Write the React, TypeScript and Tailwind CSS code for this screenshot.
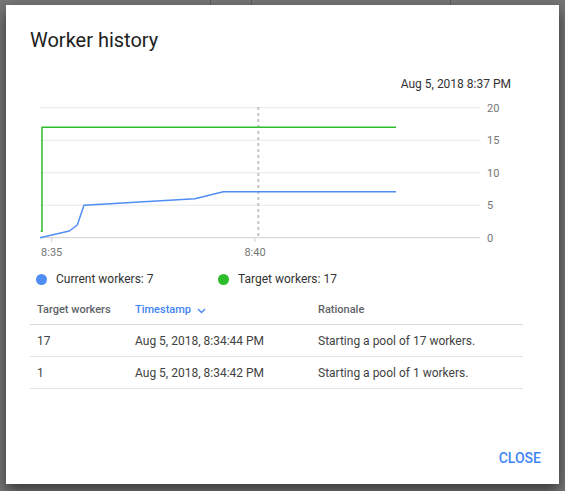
const blue = "#4f8ef5";
const green = "#2cbc2c";

const rows = [
  { target: "17", ts: "Aug 5, 2018, 8:34:44 PM", why: "Starting a pool of 17 workers." },
  { target: "1", ts: "Aug 5, 2018, 8:34:42 PM", why: "Starting a pool of 1 workers." },
];

function Chart() {
  const grid = [
    { y: 106.7, label: "20" },
    { y: 139.2, label: "15" },
    { y: 171.7, label: "10" },
    { y: 204.2, label: "5" },
    { y: 236.7, label: "0" },
  ];
  // viewBox uses the page coordinates so the points read straight off the screenshot
  return (
    <svg width={490} height={167} viewBox="30 93 490 167" className="block">
      {grid.map((g) => (
        <g key={g.label}>
          <line x1={40} x2={480} y1={g.y} y2={g.y} stroke={g.label === "0" ? "#cfcfcf" : "#e8e8e8"} strokeWidth={1} />
          <text x={487} y={g.y + 4} fontSize={11} fill="#757575" fontFamily="Roboto, sans-serif">
            {g.label}
          </text>
        </g>
      ))}
      <line x1={258.3} x2={258.3} y1={106} y2={236.7} stroke="#c4c4c4" strokeWidth={2} strokeDasharray="3 3" />
      <line x1={51.7} x2={51.7} y1={236.7} y2={241} stroke="#cfcfcf" />
      <line x1={255} x2={255} y1={236.7} y2={241} stroke="#cfcfcf" />
      <text x={51.7} y={255} fontSize={11} fill="#757575" textAnchor="middle" fontFamily="Roboto, sans-serif">
        8:35
      </text>
      <text x={255} y={255} fontSize={11} fill="#757575" textAnchor="middle" fontFamily="Roboto, sans-serif">
        8:40
      </text>
      <polyline
        points="40.7,230.2 42,230.2 42,126.2 396,126.2"
        fill="none"
        stroke={green}
        strokeWidth={1.5}
      />
      <polyline
        points="40,236.7 69.3,230 77.3,224 84,204.2 195,197.7 223.3,190.7 396,190.7"
        fill="none"
        stroke={blue}
        strokeWidth={1.5}
        strokeLinejoin="round"
      />
    </svg>
  );
}

export default function App() {
  return (
    <div className="relative h-[491px] w-[565px] overflow-hidden bg-[#767676] pl-[6px] pt-[5px] font-['Roboto',sans-serif]">
      <div className="absolute left-[210px] top-0 h-[5px] w-px bg-[#5e5e5e]" />
      <div className="absolute left-[251px] top-0 h-[5px] w-px bg-[#5e5e5e]" />
      <div className="absolute left-[450px] top-0 h-[5px] w-px bg-[#5e5e5e]" />
      <div className="relative flex h-[479px] w-[553px] flex-col bg-white shadow-[0_6px_14px_rgba(0,0,0,0.55)]">
        <h2 className="px-6 pt-[23px] text-[20px] leading-6 text-[#212121]">Worker history</h2>
        <div className="mt-[24px] flex justify-end pr-[48px] text-[12px] leading-4 text-[#333]">Aug 5, 2018 8:37 PM</div>
        <div className="mt-[2px] pl-6">
          <Chart />
        </div>
        <div className="mt-[10px] flex items-center pl-[30px] text-[12px] leading-4 text-[#333]">
          <div className="flex w-[182px] items-center gap-[9px]">
            <span className="h-[11px] w-[11px] rounded-full bg-[#4f8ef5]" />
            <span>Current workers: 7</span>
          </div>
          <div className="flex items-center gap-[9px]">
            <span className="h-[11px] w-[11px] rounded-full bg-[#2cbc2c]" />
            <span>Target workers: 17</span>
          </div>
        </div>
        <div className="mx-6 mt-[10px] w-[493px] text-[12px]">
          <div className="flex h-[28px] items-center border-b border-[#d6d6d6] text-[11px] font-medium text-[#5f6368]">
            <div className="w-[98px] pl-[7px]">Target workers</div>
            <div className="flex w-[183px] items-center gap-[6px] pl-[7px] text-[#4285f4]">
              <span>Timestamp</span>
              <svg width="9" height="6" viewBox="0 0 9 6" fill="none">
                <path d="M1 1l3.5 3.5L8 1" stroke="#4285f4" strokeWidth="1.3" />
              </svg>
            </div>
            <div className="pl-[7px]">Rationale</div>
          </div>
          {rows.map((r) => (
            <div key={r.ts} className="flex h-[32px] items-center border-b border-[#e2e2e2] text-[#424242]">
              <div className="w-[98px] pl-[7px]">{r.target}</div>
              <div className="w-[183px] pl-[7px]">{r.ts}</div>
              <div className="pl-[7px]">{r.why}</div>
            </div>
          ))}
        </div>
        <div className="mt-auto flex justify-end pb-2 pr-[10px]">
          <button className="h-9 px-2 text-[14px] font-medium text-[#4285f4]">CLOSE</button>
        </div>
      </div>
    </div>
  );
}
